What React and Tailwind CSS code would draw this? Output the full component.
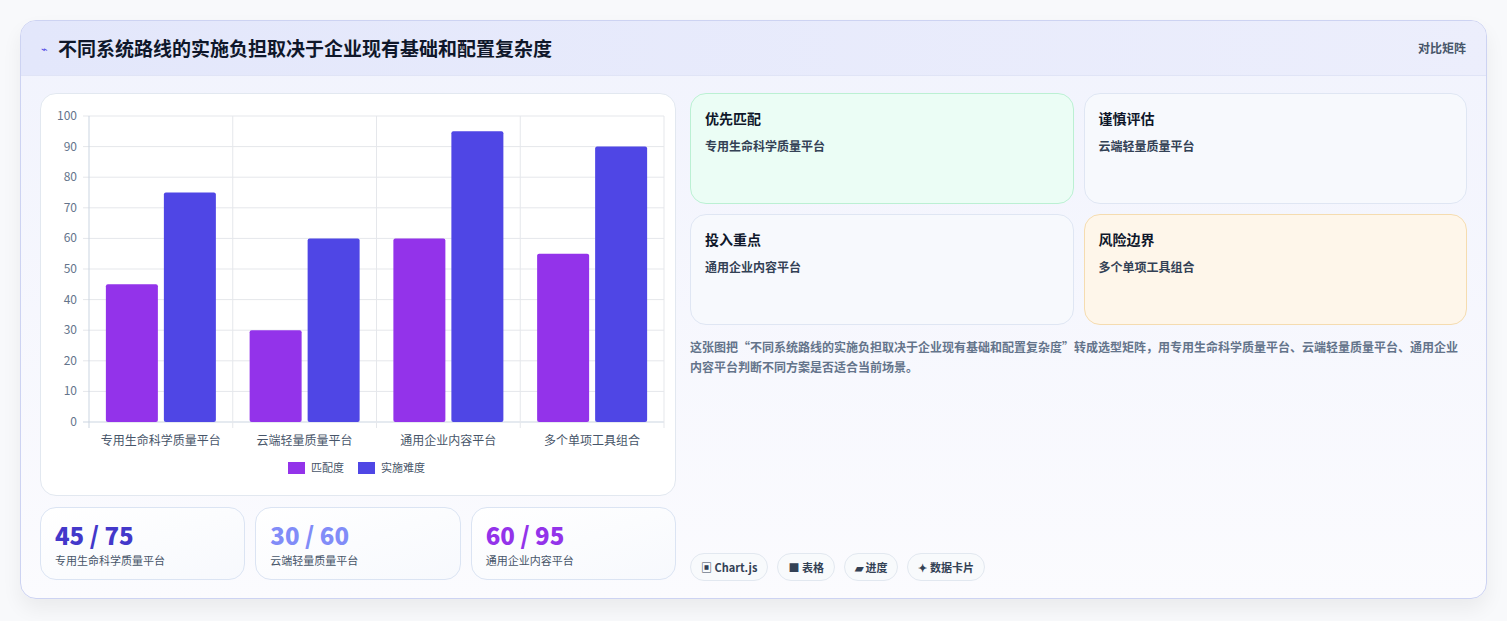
import React from "react";

const cats = ["专用生命科学质量平台", "云端轻量质量平台", "通用企业内容平台", "多个单项工具组合"];
const fit = [45, 30, 60, 55];
const diff = [75, 60, 95, 90];

function Chart() {
  // card origin at (40,93); plot x 48..623, y 22..328
  const x0 = 48, x1 = 623, y0 = 22, y1 = 328;
  const yv = (v) => y1 - ((y1 - y0) * v) / 100;
  const cw = (x1 - x0) / 4;
  return (
    <svg width="634" height="401" className="block">
      {[0, 10, 20, 30, 40, 50, 60, 70, 80, 90, 100].map((v) => (
        <g key={v}>
          <line x1={x0 - 6} x2={x1} y1={yv(v)} y2={yv(v)} stroke={v === 0 ? "#cbd5e1" : "#e5e7eb"} />
          <text x={x0 - 12} y={yv(v) + 4} textAnchor="end" fontSize="12" fill="#64748b">{v}</text>
        </g>
      ))}
      {[0, 1, 2, 3, 4].map((i) => (
        <line key={i} x1={x0 + cw * i} x2={x0 + cw * i} y1={y0} y2={y1 + 6} stroke={i === 0 ? "#cbd5e1" : "#e5e7eb"} />
      ))}
      {cats.map((c, i) => {
        const cx = x0 + cw * i + cw / 2;
        return (
          <g key={c}>
            <rect x={cx - 55} y={yv(fit[i])} width="52" height={y1 - yv(fit[i])} rx="2" fill="#9333ea" />
            <rect x={cx + 3} y={yv(diff[i])} width="52" height={y1 - yv(diff[i])} rx="2" fill="#4f46e5" />
            <text x={cx} y={351} textAnchor="middle" fontSize="12" fill="#475569">{c}</text>
          </g>
        );
      })}
      <rect x="247" y="368" width="17" height="12" fill="#9333ea" />
      <text x="270" y="378" fontSize="11" fill="#475569">匹配度</text>
      <rect x="317" y="368" width="17" height="12" fill="#4f46e5" />
      <text x="340" y="378" fontSize="11" fill="#475569">实施难度</text>
    </svg>
  );
}

function Box({ title, sub, cls }) {
  return (
    <div className={`rounded-2xl border px-[14px] py-[14px] h-[111px] ${cls}`}>
      <div className="text-[14px] font-bold text-[#0f172a]">{title}</div>
      <div className="text-[12px] font-semibold text-[#334155] mt-[8px]">{sub}</div>
    </div>
  );
}

function Stat({ v, sub, color }) {
  return (
    <div className="flex-1 rounded-2xl border border-[#dbe4f3] bg-gradient-to-br from-white to-[#f7f9fd] px-[14px] pt-[12px] h-[73px]">
      <div className={`text-[24px] font-extrabold leading-[30px] ${color}`}>{v}</div>
      <div className="text-[11px] text-[#475569] mt-[2px]">{sub}</div>
    </div>
  );
}

export default function App() {
  return (
    <div className="w-[1507px] h-[621px] bg-[#f8f9fb] pt-[20px] px-[20px]" style={{ fontFamily: '"Noto Sans CJK SC", "Noto Sans", sans-serif' }}>
      <div className="w-[1467px] h-[579px] rounded-2xl border border-[#cdd3f2] bg-gradient-to-b from-[#f1f3fd] to-[#fbfbfe] shadow-[0_10px_20px_rgba(0,0,0,0.06)] overflow-hidden">
        <div className="h-[55px] flex items-center justify-between px-[20px] bg-gradient-to-r from-[#e3e7fb] to-[#eceefc] border-b border-[#e0e4f6]">
          <div className="flex items-center gap-[10px]">
            <span className="text-[11px] text-[#4f46e5]">⌁</span>
            <span className="text-[19px] font-bold text-[#0f172a]">不同系统路线的实施负担取决于企业现有基础和配置复杂度</span>
          </div>
          <span className="text-[12px] text-[#475569] font-semibold">对比矩阵</span>
        </div>
        <div className="flex gap-[14px] px-[19px] pt-[17px]">
          <div className="w-[636px] flex flex-col gap-[11px]">
            <div className="rounded-2xl border border-[#e2e8f0] bg-white h-[403px]"><Chart /></div>
            <div className="flex gap-[10px]">
              <Stat v="45 / 75" sub="专用生命科学质量平台" color="text-[#4338ca]" />
              <Stat v="30 / 60" sub="云端轻量质量平台" color="text-[#818cf8]" />
              <Stat v="60 / 95" sub="通用企业内容平台" color="text-[#9333ea]" />
            </div>
          </div>
          <div className="w-[778px] flex flex-col">
            <div className="grid grid-cols-2 gap-[10px]">
              <Box title="优先匹配" sub="专用生命科学质量平台" cls="bg-[#ebfdf5] border-[#bbf0d3]" />
              <Box title="谨慎评估" sub="云端轻量质量平台" cls="bg-[#f7f9fd] border-[#dfe6f3]" />
              <Box title="投入重点" sub="通用企业内容平台" cls="bg-[#f7f9fd] border-[#dfe6f3]" />
              <Box title="风险边界" sub="多个单项工具组合" cls="bg-[#fef6ea] border-[#f5dcb0]" />
            </div>
            <p className="mt-[12px] text-[12px] leading-[20px] font-semibold text-[#64748b]">
              这张图把“不同系统路线的实施负担取决于企业现有基础和配置复杂度”转成选型矩阵，用专用生命科学质量平台、云端轻量质量平台、通用企业内容平台判断不同方案是否适合当前场景。
            </p>
            <div className="flex gap-[9px] mt-[176px]">
              {["▣ Chart.js", "■ 表格", "▰ 进度", "✦ 数据卡片"].map((t) => (
                <span key={t} className="h-[28px] px-[10px] flex items-center rounded-full border border-[#e2e8f0] bg-[#f8fafc] text-[11px] font-bold text-[#334155]">{t}</span>
              ))}
            </div>
          </div>
        </div>
      </div>
    </div>
  );
}
